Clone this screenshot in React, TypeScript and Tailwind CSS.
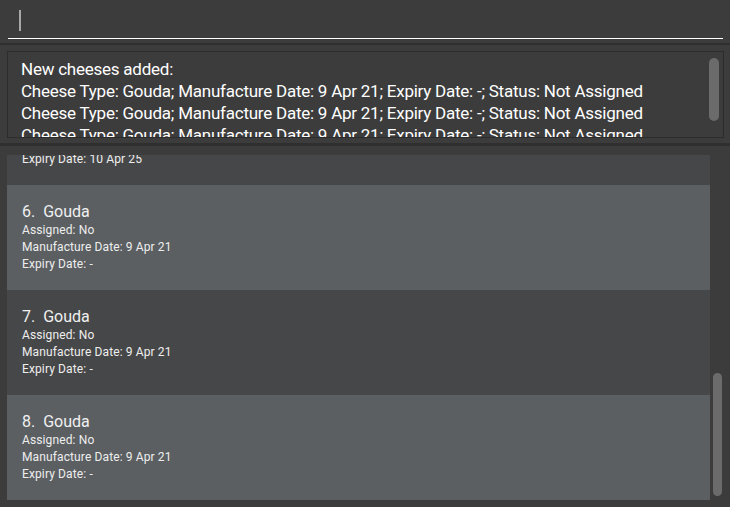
import React from "react";

type Cheese = {
  id: number;
  type: string;
  assigned: string;
  made: string;
  expiry: string;
};

const cheeses: Cheese[] = [
  { id: 5, type: "Gouda", assigned: "No", made: "9 Apr 21", expiry: "10 Apr 25" },
  { id: 6, type: "Gouda", assigned: "No", made: "9 Apr 21", expiry: "-" },
  { id: 7, type: "Gouda", assigned: "No", made: "9 Apr 21", expiry: "-" },
  { id: 8, type: "Gouda", assigned: "No", made: "9 Apr 21", expiry: "-" },
];

const line =
  "Cheese Type: Gouda; Manufacture Date: 9 Apr 21; Expiry Date: -; Status: Not Assigned";

function CheeseCard({ c, odd, first }: { c: Cheese; odd: boolean; first?: boolean }) {
  return (
    <div
      className={`h-[105px] shrink-0 pl-[15px] pt-[17px] ${odd ? "bg-[#5b5f62]" : "bg-[#464748]"} ${
        first ? "mt-[-75px]" : ""
      }`}
    >
      <div className="h-[20px] text-[16px] leading-[20px] text-[#f0f0f0]">
        {c.id}.&nbsp;&nbsp;{c.type}
      </div>
      <div className="text-[12px] leading-[17px] text-[#eeeeee] tracking-[0.01em]">
        <div>Assigned: {c.assigned}</div>
        <div>Manufacture Date: {c.made}</div>
        <div>Expiry Date: {c.expiry}</div>
      </div>
    </div>
  );
}

export default function App() {
  return (
    <div
      className="flex h-[507px] w-[730px] flex-col overflow-hidden bg-[#3c3c3c]"
      style={{ fontFamily: "Roboto, 'Liberation Sans', sans-serif" }}
    >
      {/* command box */}
      <div className="h-[43px] shrink-0 pl-[8px] pr-[7px] pt-[10px]">
        <div className="h-[29px] border-b border-white pl-[11px]">
          <div className="h-[21px] w-[2px] bg-[#a8a8a8]" />
        </div>
      </div>
      <div className="h-[2px] shrink-0 bg-[#2f2f2f]" />

      {/* result display */}
      <div className="shrink-0 pl-[7px] pr-[6px] pt-[6px]">
        <div className="flex h-[87px] border border-[#2c2c2c] bg-[#3c3c3c]">
          <div className="flex-1 overflow-hidden pl-[13px] pt-[6px] text-[17px] leading-[22px] tracking-[-0.014em] text-white">
            <div>New cheeses added:</div>
            <div className="whitespace-nowrap">{line}</div>
            <div className="whitespace-nowrap">{line}</div>
            <div className="whitespace-nowrap">{line}</div>
          </div>
          <div className="w-[14px] shrink-0 pt-[6px]">
            <div className="h-[63px] w-[10px] rounded-full bg-[#6b6b6b]" />
          </div>
        </div>
      </div>
      <div className="mt-[5px] h-[3px] shrink-0 bg-[#2f2f2f]" />

      {/* cheese list */}
      <div className="flex min-h-0 flex-1 pl-[7px] pt-[9px]">
        <div className="flex h-[345px] w-[703px] shrink-0 flex-col overflow-hidden">
          {cheeses.map((c, i) => (
            <CheeseCard key={c.id} c={c} odd={i % 2 === 1} first={i === 0} />
          ))}
        </div>
        <div className="pl-[3px] pt-[218px]">
          <div className="h-[123px] w-[9px] rounded-full bg-[#6b6b6b]" />
        </div>
      </div>
    </div>
  );
}
